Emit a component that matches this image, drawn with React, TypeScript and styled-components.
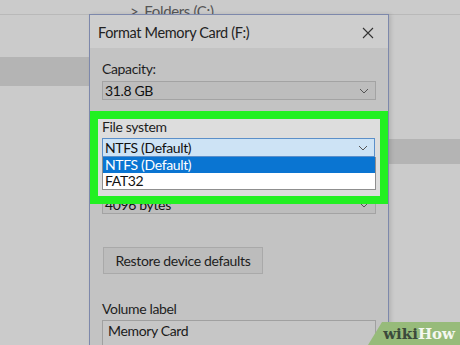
import styled, { createGlobalStyle } from 'styled-components';

const GlobalStyle = createGlobalStyle`
  html, body {
    margin: 0;
    padding: 0;
    background: #cbcbcb;
  }
  * {
    box-sizing: border-box;
  }
`;

const Screen = styled.div`
  position: relative;
  width: 460px;
  height: 345px;
  overflow: hidden;
  background: #cbcbcb;
  font-family: 'Lato', 'Noto Sans', sans-serif;
  color: #1a1a1a;
  letter-spacing: -0.35px;
`;

// explorer behind the dialog
const Explorer = styled.div`
  display: flex;
  flex-direction: column;
`;

const TreeRow = styled.div`
  display: flex;
  align-items: center;
  gap: 6px;
  height: 15px;
  padding: 7px 0 0 130px;
  font-size: 15px;
  line-height: 18px;
  color: #555;
  border-bottom: 1px solid #b9b9b9;
`;

const Band = styled.div<{ $top: number; $height: number; $side: 'left' | 'right'; $width: number }>`
  display: flex;
  justify-content: ${({ $side }) => ($side === 'left' ? 'flex-start' : 'flex-end')};
  margin-top: ${({ $top }) => $top}px;
  height: ${({ $height }) => $height}px;
  & > span {
    width: ${({ $width }) => $width}px;
    background: #b4b4b4;
  }
`;

const Dialog = styled.div`
  position: absolute;
  left: 89px;
  top: 14px;
  width: 300px;
  border: 1px solid #7d88ab;
  background: #c3c3c3;
  box-shadow: 2px 0 4px rgba(0, 0, 0, 0.12);
  display: flex;
  flex-direction: column;
`;

const TitleBar = styled.div`
  display: flex;
  align-items: center;
  justify-content: space-between;
  height: 33px;
  padding: 2px 14px 0 8px;
  background: #cecece;
  font-size: 14.5px;
  color: #222;
`;

const Close = styled.svg`
  width: 12px;
  height: 12px;
`;

const Body = styled.div`
  display: flex;
  flex-direction: column;
  padding: 11px 0 40px;
`;

const Field = styled.div<{ $gap?: number }>`
  display: flex;
  flex-direction: column;
  margin-top: ${({ $gap }) => $gap ?? 0}px;
  padding: 0 12px;
`;

const Label = styled.div`
  font-size: 14px;
  line-height: 19px;
  color: #1e1e1e;
`;

const Select = styled.div<{ $focus?: boolean }>`
  display: flex;
  align-items: center;
  justify-content: space-between;
  flex-shrink: 0;
  height: 19px;
  margin-top: 3px;
  padding: 0 6px 0 2px;
  font-size: 14px;
  border: 1px solid ${({ $focus }) => ($focus ? '#5b8fc9' : '#a3a3a3')};
  background: ${({ $focus }) => ($focus ? '#cde3f5' : '#bdbdbd')};
  color: #111;
`;

const Chevron = () => (
  <svg width="10" height="6" viewBox="0 0 10 6">
    <path d="M1 1 L5 5 L9 1" fill="none" stroke="#555" strokeWidth="1" />
  </svg>
);

const Highlight = styled.div`
  margin-top: 11px;
  position: relative;
  z-index: 1;
  border: 8px solid #22f022;
  background: #22f022;
`;

const HighlightInner = styled.div`
  display: flex;
  flex-direction: column;
  background: #dddddd;
  padding: 0 5px 6px 4px;
  & ${Label} {
    line-height: 16px;
  }
`;

const List = styled.div`
  display: flex;
  flex-direction: column;
  border: 1px solid #8f8f8f;
  border-top: none;
  background: #fff;
  margin-right: -1px;
`;

const Option = styled.div<{ $active?: boolean }>`
  height: 16px;
  padding-left: 2px;
  font-size: 14px;
  line-height: 16px;
  background: ${({ $active }) => ($active ? '#0a75d2' : '#fff')};
  color: ${({ $active }) => ($active ? '#fff' : '#111')};
`;

const Peek = styled.div`
  display: flex;
  flex-direction: column;
  justify-content: flex-end;
  height: 10px;
  overflow: hidden;
  padding: 0 12px;
`;

const Button = styled.div`
  display: flex;
  align-items: center;
  justify-content: center;
  width: 160px;
  height: 27px;
  margin: 33px 0 0 13px;
  background: #bcbcbc;
  border: 1px solid #a9a9a9;
  font-size: 14px;
  color: #1e1e1e;
`;

const TextInput = styled.div`
  height: 40px;
  margin-top: 2px;
  padding: 1px 5px;
  border: 1px solid #a0a0a0;
  background: #c6c6c6;
  font-size: 14px;
  line-height: 18px;
`;

const Watermark = styled.div`
  position: absolute;
  right: 0;
  bottom: 0;
  width: 92px;
  height: 23px;
  background: #97bb7a;
  clip-path: polygon(14px 0, 100% 0, 100% 100%, 0 100%);
  display: flex;
  align-items: flex-end;
  justify-content: flex-end;
  padding: 0 5px 2px 0;
  font-family: 'DejaVu Serif', 'Liberation Serif', serif;
  font-weight: bold;
  font-size: 15px;
  line-height: 18px;
  letter-spacing: 0;
  & .wiki {
    color: #3b4a3b;
  }
  & .how {
    color: #f4f7f0;
  }
`;

export default function App() {
  return (
    <Screen>
      <GlobalStyle />
      <Explorer>
        <TreeRow>
          <span>&gt;</span>
          <span>Folders (C:)</span>
        </TreeRow>
        <Band $top={42} $height={29} $side="left" $width={90}>
          <span />
        </Band>
        <Band $top={53} $height={25} $side="right" $width={72}>
          <span />
        </Band>
      </Explorer>

      <Dialog>
        <TitleBar>
          <span>Format Memory Card (F:)</span>
          <Close viewBox="0 0 12 12">
            <path d="M1 1 L11 11 M11 1 L1 11" stroke="#333" strokeWidth="1.1" />
          </Close>
        </TitleBar>
        <Body>
          <Field>
            <Label>Capacity:</Label>
            <Select>
              <span>31.8 GB</span>
              <Chevron />
            </Select>
          </Field>

          <Highlight>
            <HighlightInner>
              <Label>File system</Label>
              <Select $focus>
                <span>NTFS (Default)</span>
                <Chevron />
              </Select>
              <List>
                <Option $active>NTFS (Default)</Option>
                <Option>FAT32</Option>
              </List>
            </HighlightInner>
          </Highlight>

          <Peek>
            <Select>
              <span>4096 bytes</span>
              <Chevron />
            </Select>
          </Peek>

          <Button>Restore device defaults</Button>

          <Field $gap={25}>
            <Label>Volume label</Label>
            <TextInput>Memory Card</TextInput>
          </Field>
        </Body>
      </Dialog>

      <Watermark>
        <span className="wiki">wiki</span>
        <span className="how">How</span>
      </Watermark>
    </Screen>
  );
}
